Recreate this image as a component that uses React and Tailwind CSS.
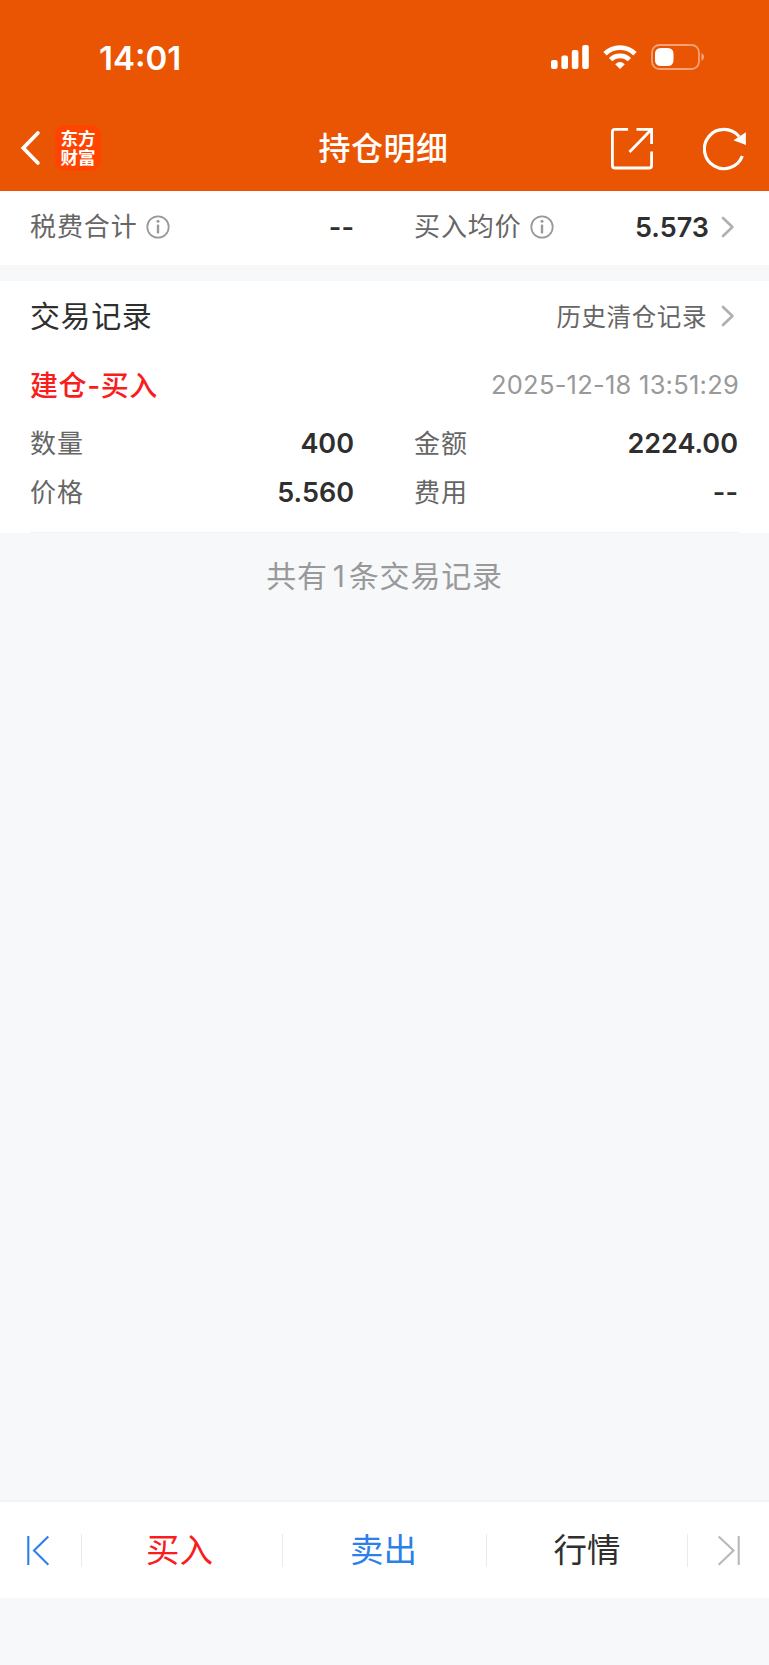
const cjk = "font-['Inter','Noto_Sans_CJK_SC',sans-serif]";

function InfoIcon() {
  return (
    <svg className="h-6 w-6 shrink-0" viewBox="0 0 24 24" fill="none" stroke="#999" strokeWidth="1.8">
      <circle cx="12" cy="12" r="10.7" />
      <path d="M12 9.6V18.4" strokeWidth="2.4" />
      <circle cx="12" cy="6.3" r="1.5" fill="#999" stroke="none" />
    </svg>
  );
}

function Chevron() {
  return (
    <svg className="h-[22px] w-[14px] shrink-0" viewBox="0 0 14 22" fill="none" stroke="#b0b0b0" strokeWidth="2.7" strokeLinecap="round" strokeLinejoin="round">
      <path d="M2 2L11.4 11L2 20" />
    </svg>
  );
}

function Label({ children }) {
  return <span className="text-[26px] tracking-[0.9px] text-[#666]">{children}</span>;
}

function Value({ children }) {
  return <span className="text-[27px] font-semibold text-[#2f2f2f]">{children}</span>;
}

function Row({ items }) {
  return (
    <div className="grid h-[49px] grid-cols-[324px_324px] gap-x-[60px]">
      {items.map(([label, value]) => (
        <div key={label} className="flex items-center justify-between">
          <Label>{label}</Label>
          <Value>{value}</Value>
        </div>
      ))}
    </div>
  );
}

function StatusBar() {
  return (
    <div className="flex h-[114px] items-center justify-between pr-[64px] pl-[99px]">
      <span className="pt-[2px] text-[33px] font-semibold">14:01</span>
      <div className="flex items-center gap-[14px]">
        <svg className="h-6 w-[38px]" viewBox="0 0 38 24" fill="#fff">
          <rect x="0" y="15" width="6.6" height="9" rx="2" />
          <rect x="10.4" y="10.5" width="6.6" height="13.5" rx="2" />
          <rect x="20.8" y="5" width="6.6" height="19" rx="2" />
          <rect x="31.2" y="0" width="6.6" height="24" rx="2" />
        </svg>
        <svg className="h-6 w-[34px]" viewBox="0 0 34 24" fill="none" stroke="#fff" strokeWidth="4.8">
          <path d="M2 8.8A21.5 21.5 0 0 1 32 8.8" />
          <path d="M7.6 14.6A13.5 13.5 0 0 1 26.4 14.6" />
          <path d="M12.2 19.2Q17 14.6 21.8 19.2L17 24Z" fill="#fff" stroke="none" />
        </svg>
        <svg className="h-[26px] w-[54px]" viewBox="0 0 54 26">
          <rect x="1" y="1" width="47" height="24" rx="7.5" fill="none" stroke="#fff" strokeOpacity=".45" strokeWidth="1.8" />
          <rect x="4" y="4" width="18.5" height="18" rx="5.5" fill="#fff" />
          <path d="M50.5 9Q53 10.5 53 13T50.5 17Z" fill="#fff" fillOpacity=".5" />
        </svg>
      </div>
    </div>
  );
}

function NavBar() {
  return (
    <div className="grid h-[77px] grid-cols-[1fr_auto_1fr] items-start">
      <div className="flex items-center gap-[14px] pt-[11px] pl-5">
        <svg className="h-9 w-[21px]" viewBox="0 0 21 36" fill="none" stroke="#fff" strokeWidth="3.8" strokeLinecap="round" strokeLinejoin="miter">
          <path d="M17.9 3L3.3 18L17.9 33" />
        </svg>
        <div className="flex h-[46px] w-[46px] items-center justify-center rounded-[10px] bg-[#ff4400] pb-[2px] font-['Noto_Sans_CJK_SC',sans-serif] text-[17.5px] leading-[19.5px] font-bold">
          <span>
            东方
            <br />
            财富
          </span>
        </div>
      </div>
      <h1 className="pt-[11px] pr-[2px] text-[32px] leading-[48px] font-medium tracking-[0.5px]">持仓明细</h1>
      <div className="flex justify-end gap-[48px] pt-[13px] pr-[22px]">
        <svg className="h-[44px] w-[44px]" viewBox="0 0 44 44" fill="none" stroke="#fff" strokeWidth="2.8">
          <path d="M17.1 2.3H3.9Q1.4 2.3 1.4 4.8V38.5Q1.4 41 3.9 41H38.1Q40.6 41 40.6 38.5V24.5" />
          <path d="M25.5 2.3H40.6V17M40.6 2.3L18.5 25" />
        </svg>
        <svg className="h-[44px] w-[44px]" viewBox="0 0 44 44" fill="none" stroke="#fff" strokeWidth="3.2">
          <path d="M39.3 29A19.6 19.6 0 1 1 36 9.5" />
          <path d="M42.9 5.3V18L30.5 13.3Z" fill="#fff" stroke="none" />
        </svg>
      </div>
    </div>
  );
}

function Divider() {
  return <div className="h-[33px] w-px bg-[#ebebeb]" />;
}

export default function App() {
  return (
    <div className={`flex h-[1665px] w-[769px] flex-col bg-[#f7f8fa] leading-none ${cjk}`}>
      <header className="h-[191px] bg-[#ea5504] text-white">
        <StatusBar />
        <NavBar />
      </header>

      <section className="flex h-[74px] bg-white pt-[11px] pl-[30px]">
        <div className="flex h-[50px] w-[324px] items-center">
          <Label>税费合计</Label>
          <div className="ml-[8px] flex-1"><InfoIcon /></div>
          <Value>--</Value>
        </div>
        <div className="ml-[60px] flex h-[50px] w-[321px] items-center">
          <Label>买入均价</Label>
          <div className="ml-[8px] flex-1"><InfoIcon /></div>
          <Value>5.573</Value>
          <div className="ml-[12px]"><Chevron /></div>
        </div>
      </section>

      <section className="mt-4 h-[252px] bg-white px-[30px]">
        <div className="flex h-[70px] items-center justify-between pr-[4px]">
          <h2 className="text-[30px] tracking-[0.6px] text-[#2f2f2f]">交易记录</h2>
          <div className="flex items-center gap-[14px]">
            <span className="pt-[2px] text-[24.5px] tracking-[0.6px] text-[#666]">历史清仓记录</span>
            <Chevron />
          </div>
        </div>
        <div className="flex h-[68px] items-center justify-between">
          <span className="pt-px text-[28px] font-medium tracking-[0.6px] text-[#f91d1d]">建仓-买入</span>
          <span className="text-[25.5px] tracking-[0.24px] text-[#999]">2025-12-18 13:51:29</span>
        </div>
        <Row items={[["数量", "400"], ["金额", "2224.00"]]} />
        <Row items={[["价格", "5.560"], ["费用", "--"]]} />
        <div className="mt-[15px] h-px bg-[#f2f3f5]" />
      </section>

      <p className="flex h-[86px] items-center justify-center text-[30px] tracking-[0.8px] text-[#999]">
        <span>共有<span className="mr-[3px] ml-[5px]">1</span>条交易记录</span>
      </p>

      <nav className="mt-auto mb-[67px] flex h-[98px] items-center border-t-2 border-[#f2f3f5] bg-white text-[33.5px]">
        <div className="flex w-[81px] pl-[26px]">
          <svg className="h-[31px] w-6" viewBox="0 0 24 31" fill="none" stroke="#2d7fea" strokeWidth="2.1">
            <path d="M2.3 1V30M22.3 1.5L8 15.5L22.3 29.8" />
          </svg>
        </div>
        <Divider />
        <div className="w-[200px] pt-[2px] pr-[5px] text-center text-[#f91d1d]">买入</div>
        <Divider />
        <div className="w-[203px] pt-[2px] pr-[2px] text-center text-[#2d7fea]">卖出</div>
        <Divider />
        <div className="w-[200px] pt-[2px] text-center text-[#2f2f2f]">行情</div>
        <Divider />
        <div className="flex flex-1 justify-end pr-[28px]">
          <svg className="h-[31px] w-6" viewBox="0 0 24 31" fill="none" stroke="#b8b8b8" strokeWidth="2.1">
            <path d="M21.7 1V30M1.7 1.5L16.5 15.5L1.7 29.8" />
          </svg>
        </div>
      </nav>
    </div>
  );
}
